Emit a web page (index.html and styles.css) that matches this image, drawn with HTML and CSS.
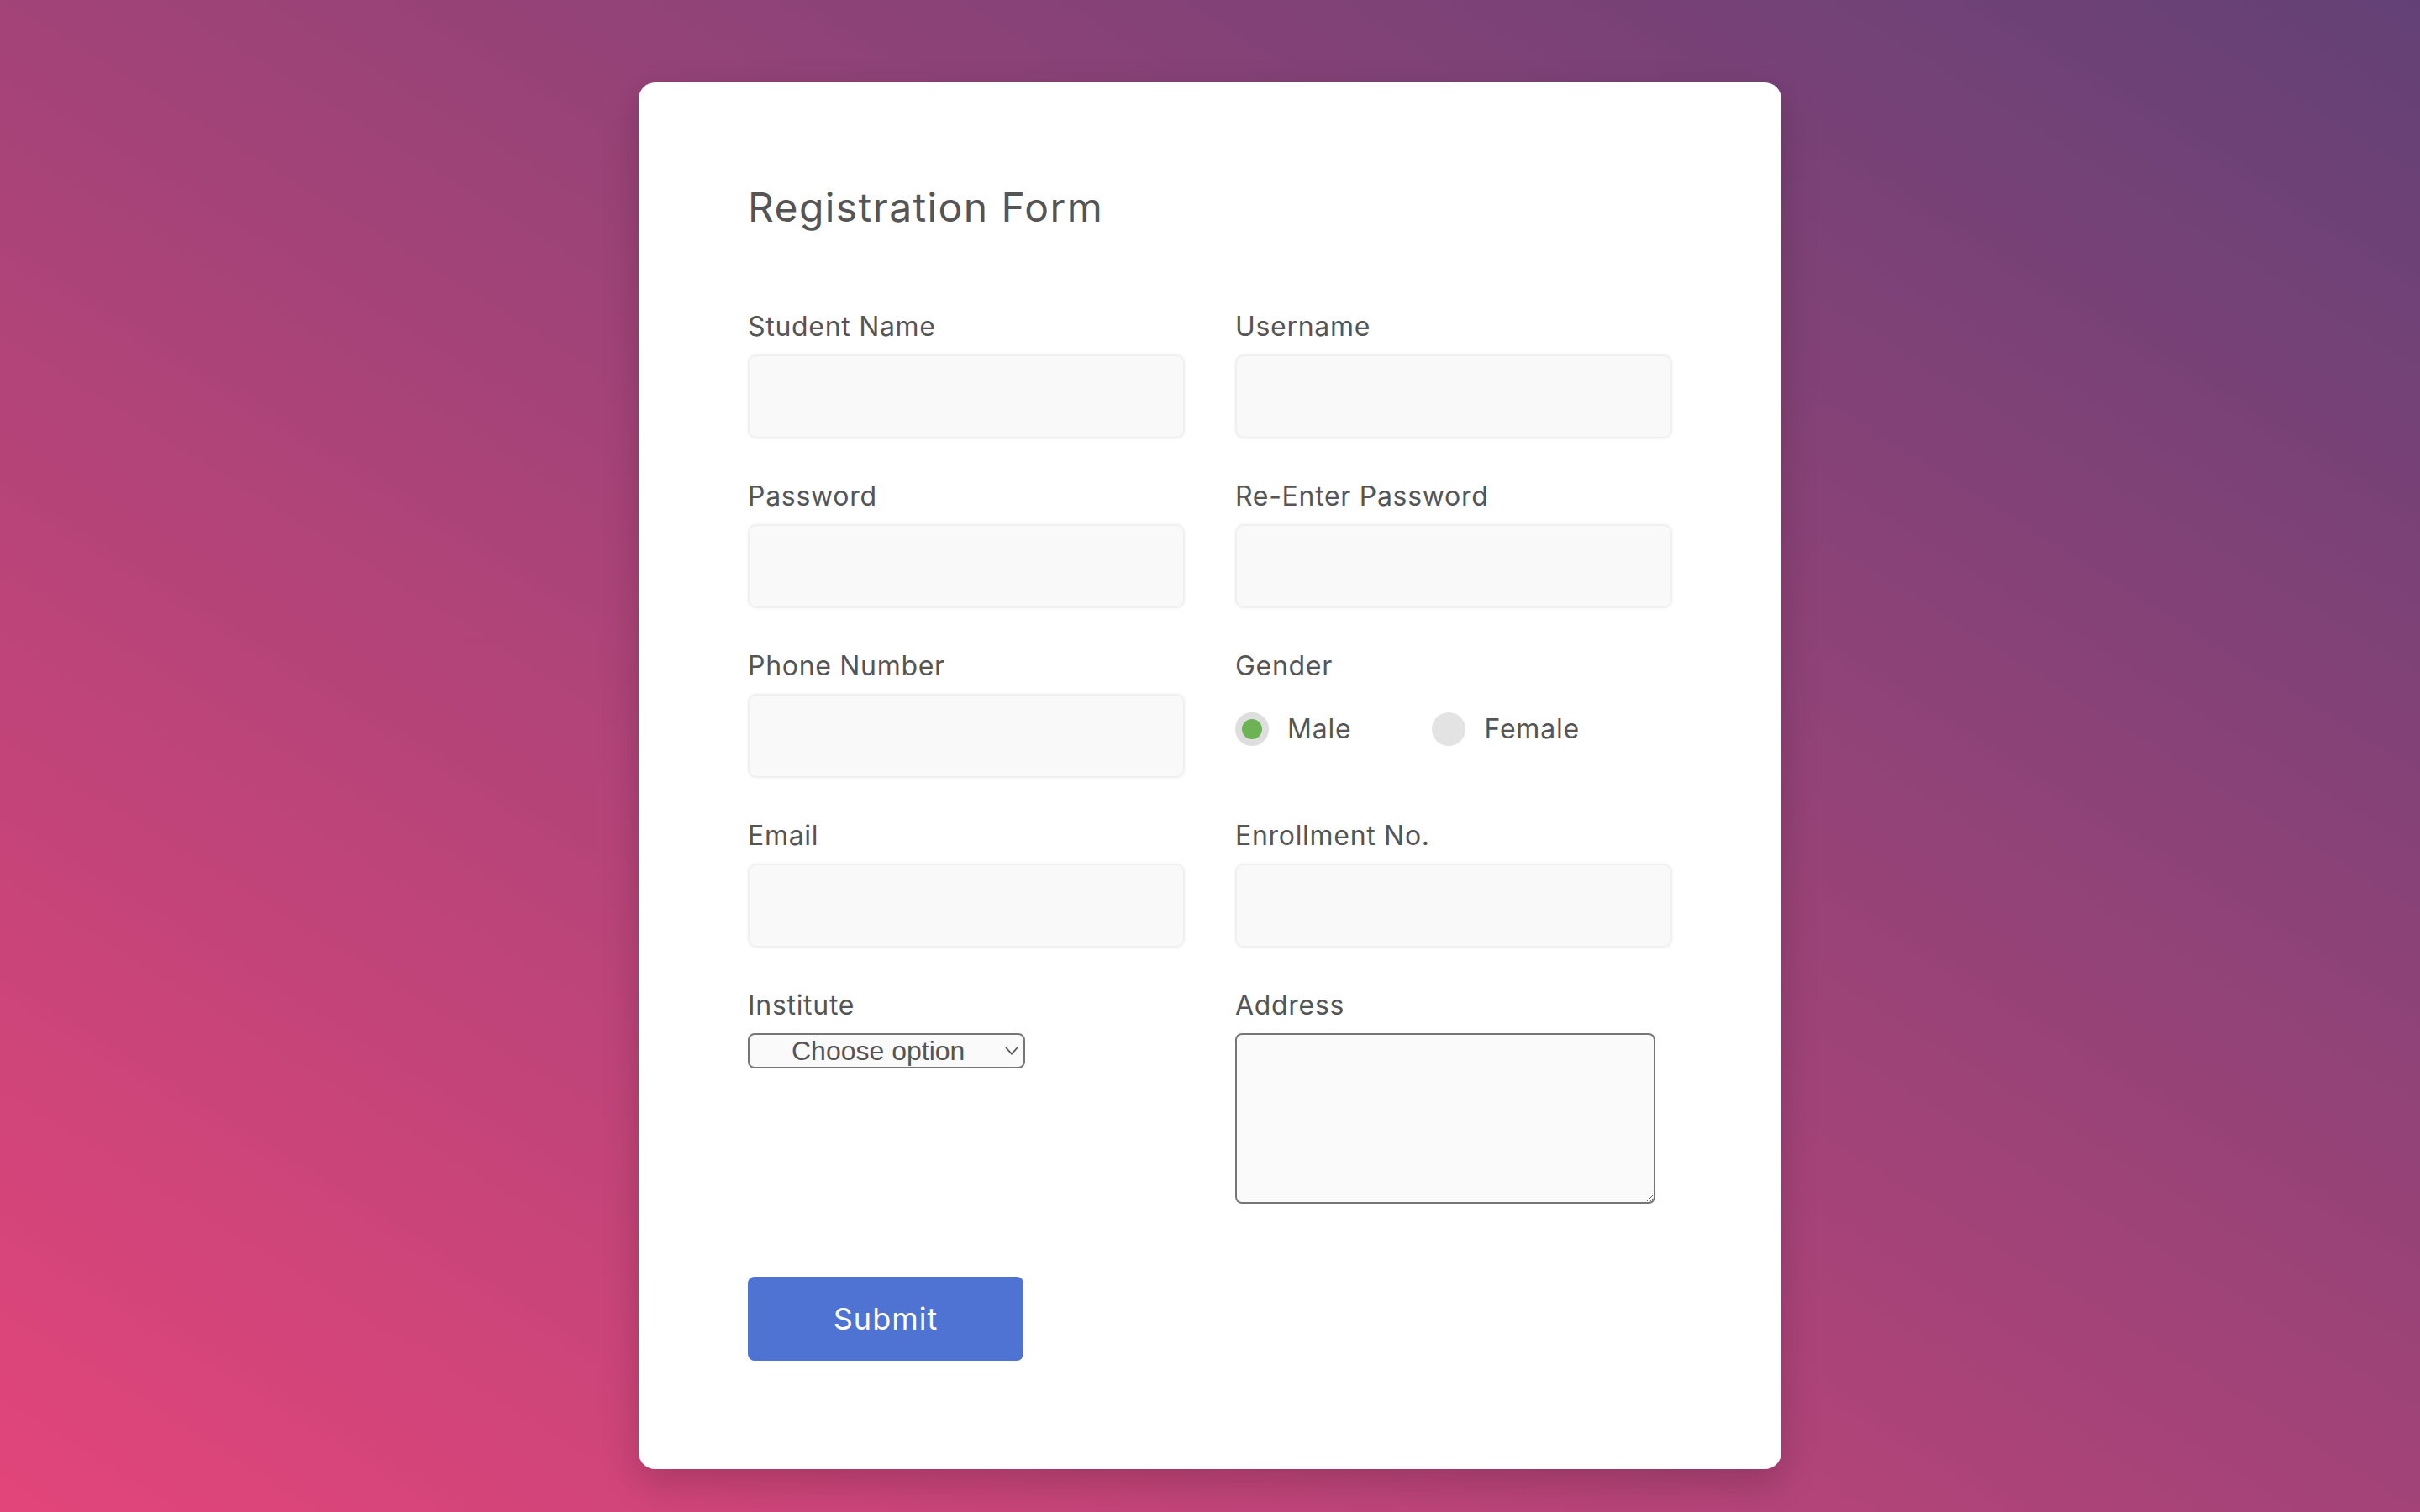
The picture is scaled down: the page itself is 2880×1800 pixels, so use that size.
FILE: index.html
```html
<!DOCTYPE html>
<html lang="en">
<head>
<meta charset="utf-8">
<title>Registration Form</title>
<link rel="stylesheet" href="styles.css">
</head>
<body>
  <main class="card">
    <h1 class="title">Registration Form</h1>
    <form class="form">
      <div class="grid">
        <div class="field">
          <label class="label" for="name">Student Name</label>
          <input class="input" id="name" type="text">
        </div>
        <div class="field">
          <label class="label" for="username">Username</label>
          <input class="input" id="username" type="text">
        </div>
        <div class="field">
          <label class="label" for="pw">Password</label>
          <input class="input" id="pw" type="password">
        </div>
        <div class="field">
          <label class="label" for="pw2">Re-Enter Password</label>
          <input class="input" id="pw2" type="password">
        </div>
        <div class="field">
          <label class="label" for="phone">Phone Number</label>
          <input class="input" id="phone" type="text">
        </div>
        <div class="field">
          <span class="label">Gender</span>
          <div class="radios">
            <label class="radio-option"><input class="radio" type="radio" name="gender" checked><span>Male</span></label>
            <label class="radio-option"><input class="radio" type="radio" name="gender"><span>Female</span></label>
          </div>
        </div>
        <div class="field">
          <label class="label" for="email">Email</label>
          <input class="input" id="email" type="email">
        </div>
        <div class="field">
          <label class="label" for="enroll">Enrollment No.</label>
          <input class="input" id="enroll" type="text">
        </div>
        <div class="field">
          <label class="label" for="inst">Institute</label>
          <div class="select-wrap">
            <select class="select" id="inst">
              <option>Choose option</option>
            </select>
            <svg class="chevron" viewBox="0 0 16 10" width="16" height="10" aria-hidden="true"><path d="M1 1 L8 8.6 L15 1" fill="none" stroke="#555" stroke-width="1.8"/></svg>
          </div>
        </div>
        <div class="field">
          <label class="label" for="addr">Address</label>
          <textarea class="textarea" id="addr"></textarea>
        </div>
      </div>
      <button class="submit" type="button">Submit</button>
    </form>
  </main>
</body>
</html>
```

FILE: styles.css
```css
html {
  height: 100%;
}

body {
  margin: 0;
  min-height: 100%;
  box-sizing: border-box;
  padding-top: 98px;
  display: flex;
  justify-content: center;
  align-items: flex-start;
  background: linear-gradient(to top right, #e2457a 0%, #634176 100%);
  font-family: Inter, "Noto Sans", sans-serif;
  color: #555;
}

.card {
  width: 1360px;
  box-sizing: border-box;
  padding: 113px 130px 129px;
  background: #fff;
  border-radius: 20px;
  box-shadow: 0 16px 44px rgba(0, 0, 0, 0.18);
}

.title {
  margin: 0 0 80px;
  font-size: 48px;
  line-height: 72px;
  font-weight: 400;
  color: #555;
  letter-spacing: 1.4px;
}

.form {
  margin: 0;
}

.grid {
  display: grid;
  grid-template-columns: 520px 520px;
  column-gap: 60px;
  row-gap: 43px;
  align-items: start;
}

.field {
  display: flex;
  flex-direction: column;
  align-items: flex-start;
}

.label {
  display: block;
  font-size: 32px;
  line-height: 48px;
  padding-top: 2px;
  margin-bottom: 9px;
  color: #555;
  letter-spacing: 0.7px;
}

.input {
  width: 520px;
  height: 100px;
  box-sizing: border-box;
  margin: 0;
  padding: 0 24px;
  border: 2px solid #f0f0f0;
  border-radius: 10px;
  background: #f9f9f9;
  box-shadow: 0 0 4px rgba(0, 0, 0, 0.05);
  font: inherit;
  color: #555;
  outline: none;
}

.radios {
  height: 84px;
  display: flex;
  align-items: center;
}

.radio-option {
  display: flex;
  align-items: center;
  font-size: 32px;
  line-height: 48px;
  color: #555;
  letter-spacing: 0.8px;
  margin-right: 96px;
}

.radio {
  appearance: none;
  -webkit-appearance: none;
  width: 40px;
  height: 40px;
  margin: 0 22px 0 0;
  box-sizing: border-box;
  border-radius: 50%;
  background: #e3e3e3;
  border: none;
}

.radio:checked {
  border: 8px solid #dedede;
  background: #6cb354;
}

.select-wrap {
  position: relative;
  width: 330px;
  height: 42px;
}

.select {
  appearance: none;
  -webkit-appearance: none;
  width: 330px;
  height: 42px;
  box-sizing: border-box;
  margin: 0;
  padding: 0 40px 0 50px;
  border: 2px solid #767676;
  border-radius: 8px;
  background: #fafafa;
  font-family: "Liberation Sans", Arial, sans-serif;
  font-size: 32px;
  line-height: 38px;
  color: #555;
  text-align: left;
}

.chevron {
  position: absolute;
  right: 8px;
  top: 16px;
  pointer-events: none;
}

.textarea {
  width: 500px;
  height: 203px;
  box-sizing: border-box;
  margin: 0;
  border: 2px solid #767676;
  border-radius: 8px;
  background: #fafafa;
  font: inherit;
  resize: both;
}

.submit {
  display: block;
  margin-top: 87px;
  width: 328px;
  height: 100px;
  border: none;
  border-radius: 8px;
  background: #4e73d3;
  color: #fff;
  font-family: Inter, "Noto Sans", sans-serif;
  font-size: 36px;
  line-height: 48px;
  letter-spacing: 1px;
  padding: 0;
  cursor: pointer;
}
```
